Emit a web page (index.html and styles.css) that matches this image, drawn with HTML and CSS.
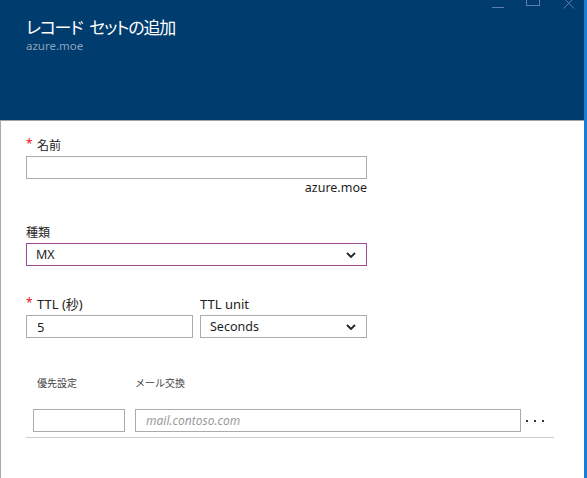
FILE: index.html
```html
<!DOCTYPE html>
<html lang="ja">
<head>
<meta charset="utf-8">
<title>レコード セットの追加</title>
<link rel="stylesheet" href="styles.css">
</head>
<body>
<div class="blade">
  <div class="main">
    <header class="header">
      <div class="controls">
        <svg class="ctl" width="100" height="12" viewBox="0 0 100 12">
          <line x1="8" y1="7.5" x2="20" y2="7.5" stroke="#5b7fa6" stroke-width="1"/>
          <rect x="42.5" y="-3.5" width="13" height="9" fill="none" stroke="#5b7fa6" stroke-width="1"/>
          <path d="M79.5 -2 L90 8.5 M90 -2 L79.5 8.5" stroke="#5b7fa6" stroke-width="1" fill="none"/>
        </svg>
      </div>
      <h1 class="title">レコード セットの追加</h1>
      <div class="subtitle">azure.moe</div>
    </header>
    <div class="content">
      <div class="field">
        <label class="label"><span class="req">*</span>名前</label>
        <input class="input wide" type="text">
        <div class="suffix">azure.moe</div>
      </div>
      <div class="field type-field">
        <label class="label">種類</label>
        <div class="select wide focused">
          <span>MX</span>
          <svg class="chev" width="10" height="6" viewBox="0 0 10 6"><path d="M1 1 L5 5 L9 1" fill="none" stroke="#222" stroke-width="1.8"/></svg>
        </div>
      </div>
      <div class="ttl-row">
        <div class="field half">
          <label class="label"><span class="req">*</span>TTL (秒)</label>
          <div class="input val">5</div>
        </div>
        <div class="field half">
          <label class="label plain">TTL unit</label>
          <div class="select">
            <span>Seconds</span>
            <svg class="chev" width="10" height="6" viewBox="0 0 10 6"><path d="M1 1 L5 5 L9 1" fill="none" stroke="#222" stroke-width="1.8"/></svg>
          </div>
        </div>
      </div>
      <div class="records">
        <div class="rec-head">
          <span class="col-pri">優先設定</span>
          <span class="col-mail">メール交換</span>
        </div>
        <div class="rec-row">
          <div class="cell pri"></div>
          <div class="cell mail"><span class="ph">mail.contoso.com</span></div>
          <div class="more"><i></i><i></i><i></i></div>
        </div>
      </div>
    </div>
  </div>
  <div class="edge"></div>
</div>
</body>
</html>
```

FILE: styles.css
```css
html, body {
  margin: 0;
  padding: 0;
  width: 587px;
  height: 478px;
  overflow: hidden;
  background: #ffffff;
}
body {
  font-family: "Segoe UI", "Noto Sans", "Noto Sans CJK JP", sans-serif;
  color: #1e1e1e;
}
.blade {
  display: flex;
  height: 478px;
}
.main {
  flex: 1;
  display: flex;
  flex-direction: column;
}
.edge {
  width: 3px;
  background: #1a7ad4;
}
.header {
  position: relative;
  background: #003c6d;
  border-bottom: 1px solid #a3a3a3;
  padding: 15px 0 0 26px;
  box-sizing: border-box;
  height: 121px;
}
.controls {
  position: absolute;
  top: 0;
  right: 0;
  line-height: 0;
}
.title {
  margin: 0;
  font-family: "Noto Sans CJK JP", sans-serif;
  font-weight: 400;
  font-size: 17px;
  line-height: 24px;
  color: #ffffff;
  font-feature-settings: "palt";
  letter-spacing: -1.2px;
  word-spacing: 4px;
}
.subtitle {
  font-family: "Noto Sans", sans-serif;
  font-size: 11.5px;
  line-height: 14px;
  color: #8ba2bc;
  margin-top: 0;
}
.content {
  flex: 1;
  border-left: 1px solid #a9a9a9;
  padding: 16px 0 0 25px;
}
.field {
  display: flex;
  flex-direction: column;
  width: 341px;
}
.label {
  font-family: "Noto Sans CJK JP", sans-serif;
  font-size: 12px;
  line-height: 16px;
  height: 16px;
  margin-bottom: 3px;
  color: #222;
  display: flex;
  align-items: center;
}
.label.plain, .ttl-row .label {
  font-family: "Noto Sans", "Noto Sans CJK JP", sans-serif;
  font-size: 13px;
}
.req {
  color: #e81123;
  font-size: 12px;
  width: 11px;
  margin-top: -2px;
  font-family: "Noto Sans", sans-serif;
}
.input {
  box-sizing: border-box;
  height: 23px;
  border: 1px solid #ababab;
  margin: 0;
  padding: 0 10px;
  font: 13px "Noto Sans", sans-serif;
  background: #fff;
}
.input.wide {
  width: 341px;
}
.input.val {
  display: flex;
  align-items: center;
  color: #1e1e1e;
}
.suffix {
  text-align: right;
  font-family: "Noto Sans", sans-serif;
  font-size: 12.5px;
  line-height: 16px;
  margin-top: 1px;
  color: #1e1e1e;
}
.type-field {
  margin-top: 28px;
}
.select {
  box-sizing: border-box;
  height: 23px;
  border: 1px solid #ababab;
  display: flex;
  align-items: center;
  justify-content: space-between;
  padding: 0 10px 0 9px;
  font-family: "Noto Sans", sans-serif;
  font-size: 12.5px;
  color: #1e1e1e;
}
.select.focused {
  border-color: #9a4b98;
}
.chev {
  display: block;
}
.ttl-row {
  display: flex;
  gap: 7px;
  margin-top: 30px;
}
.field.half {
  width: 167px;
}
.records {
  width: 528px;
  margin-top: 38px;
  border-bottom: 1px solid #cccccc;
  padding-bottom: 5px;
}
.rec-head {
  display: flex;
  font-family: "Noto Sans CJK JP", sans-serif;
  font-size: 10px;
  line-height: 14px;
  color: #444;
  padding-left: 11px;
}
.col-pri {
  width: 98px;
}
.rec-row {
  display: flex;
  align-items: center;
  gap: 10px;
  margin-top: 19px;
  padding-left: 7px;
}
.cell {
  box-sizing: border-box;
  height: 23px;
  border: 1px solid #ababab;
}
.cell.pri {
  width: 92px;
}
.cell.mail {
  width: 386px;
  display: flex;
  align-items: center;
  padding-left: 10px;
}
.ph {
  font-family: "Noto Sans", sans-serif;
  font-style: italic;
  font-size: 12px;
  color: #9a9a9a;
}
.more {
  display: flex;
  gap: 6px;
  margin-left: -5px;
  margin-top: 1px;
}
.more i {
  display: block;
  width: 2px;
  height: 2px;
  background: #333;
}
```
